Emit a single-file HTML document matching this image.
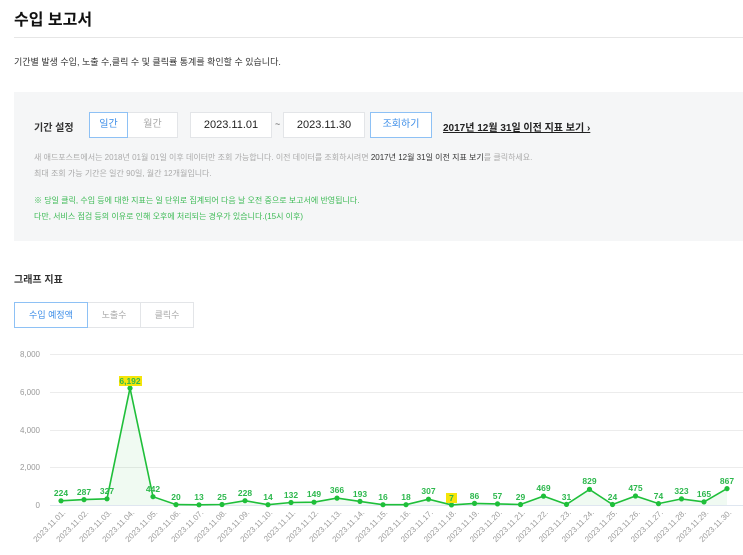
<!DOCTYPE html>
<html><head><meta charset="utf-8">
<style>
*{margin:0;padding:0;box-sizing:border-box}
body{width:743px;height:555px;background:#fff;font-family:"Liberation Sans","Noto Sans CJK KR",sans-serif;color:#222;position:relative;overflow:hidden}
.a{position:absolute;white-space:nowrap}
.box{position:absolute;background:#fff;border:1px solid #e3e5e8;display:flex;align-items:center;justify-content:center;font-size:10px;color:#aaa;line-height:1}
</style></head><body>
<div class="a" style="left:14px;top:6px;font-size:16px;font-weight:bold;color:#111">수입 보고서</div>
<div class="a" style="left:14px;top:37px;width:729px;height:1px;background:#e6e6e6"></div>
<div class="a" style="left:14px;top:55px;font-size:9px;color:#333">기간별 발생 수입, 노출 수,클릭 수 및 클릭률 통계를 확인할 수 있습니다.</div>

<div class="a" style="left:14px;top:92px;width:729px;height:149px;background:#f5f6f7"></div>
<div class="a" style="left:34px;top:119px;font-size:10px;font-weight:bold;color:#333">기간 설정</div>
<div class="box" style="left:89px;top:112px;width:39px;height:26px;border-color:#8ec1f5;color:#3d8ee8;z-index:2">일간</div>
<div class="box" style="left:127px;top:112px;width:51px;height:26px">월간</div>
<div class="box" style="left:190px;top:112px;width:82px;height:26px;color:#222;font-size:11px">2023.11.01</div>
<div class="a" style="left:275px;top:119px;font-size:9px;color:#555">~</div>
<div class="box" style="left:283px;top:112px;width:82px;height:26px;color:#222;font-size:11px">2023.11.30</div>
<div class="box" style="left:370px;top:112px;width:62px;height:26px;border-color:#8ec1f5;color:#3d8ee8">조회하기</div>
<div class="a" style="left:443px;top:119px;font-size:10px;font-weight:bold;color:#222;text-decoration:underline">2017년 12월 31일 이전 지표 보기 <span style="text-decoration:none">›</span></div>
<div class="a" style="left:34px;top:152px;font-size:8px;color:#aaa">새 애드포스트에서는 2018년 01월 01일 이후 데이터만 조회 가능합니다. 이전 데이터를 조회하시려면 <span style="color:#333">2017년 12월 31일 이전 지표 보기</span>를 클릭하세요.</div>
<div class="a" style="left:34px;top:168px;font-size:8px;color:#aaa">최대 조회 가능 기간은 일간 90일, 월간 12개월입니다.</div>
<div class="a" style="left:34px;top:195px;font-size:8px;color:#3cba54">※ 당일 클릭, 수입 등에 대한 지표는 일 단위로 집계되어 다음 날 오전 중으로 보고서에 반영됩니다.</div>
<div class="a" style="left:34px;top:211px;font-size:8px;color:#3cba54">다만, 서비스 점검 등의 이유로 인해 오후에 처리되는 경우가 있습니다.(15시 이후)</div>

<div class="a" style="left:14px;top:271px;font-size:10px;font-weight:bold;color:#333">그래프 지표</div>
<div class="box" style="left:14px;top:302px;width:74px;height:26px;border-color:#8ec1f5;color:#3d8ee8;z-index:2;font-size:9px">수입 예정액</div>
<div class="box" style="left:87px;top:302px;width:54px;height:26px;font-size:9px">노출수</div>
<div class="box" style="left:140px;top:302px;width:54px;height:26px;font-size:9px">클릭수</div>

<svg class="a" style="left:0;top:0" width="743" height="555" font-family="Liberation Sans, sans-serif">
<g stroke="#ececec" stroke-width="1">
<line x1="50" y1="354.5" x2="743" y2="354.5"/><line x1="50" y1="392.5" x2="743" y2="392.5"/><line x1="50" y1="430.5" x2="743" y2="430.5"/><line x1="50" y1="467.5" x2="743" y2="467.5"/>
</g>
<line x1="50" y1="505.5" x2="743" y2="505.5" stroke="#dfe6f0"/>
<g font-size="8" fill="#999" text-anchor="end">
<text x="40" y="357">8,000</text><text x="40" y="395">6,000</text><text x="40" y="433">4,000</text><text x="40" y="470">2,000</text><text x="40" y="508">0</text>
</g>
<polygon fill="#2db84d" fill-opacity="0.07" points="61,505 61,500.8 84,499.6 107,498.8 130,388.1 153,496.7 176,504.6 199,504.8 222,504.5 245,500.7 268,504.7 291,502.5 314,502.2 337,498.1 360,501.4 383,504.7 406,504.7 428.5,499.2 451.5,504.9 474.5,503.4 497.5,503.9 520.5,504.5 543.5,496.1 566.5,504.4 589.5,489.4 612.5,504.5 635.5,496 658.5,503.6 681.5,498.9 704,501.9 727,488.6 727,505"/>
<polyline fill="none" stroke="#1fbf3a" stroke-width="1.6" points="61,500.8 84,499.6 107,498.8 130,388.1 153,496.7 176,504.6 199,504.8 222,504.5 245,500.7 268,504.7 291,502.5 314,502.2 337,498.1 360,501.4 383,504.7 406,504.7 428.5,499.2 451.5,504.9 474.5,503.4 497.5,503.9 520.5,504.5 543.5,496.1 566.5,504.4 589.5,489.4 612.5,504.5 635.5,496 658.5,503.6 681.5,498.9 704,501.9 727,488.6"/>
<g fill="#1fbf3a">
<circle cx="61" cy="500.8" r="2.6"/><circle cx="84" cy="499.6" r="2.6"/><circle cx="107" cy="498.8" r="2.6"/><circle cx="130" cy="388.1" r="2.6"/><circle cx="153" cy="496.7" r="2.6"/><circle cx="176" cy="504.6" r="2.6"/><circle cx="199" cy="504.8" r="2.6"/><circle cx="222" cy="504.5" r="2.6"/><circle cx="245" cy="500.7" r="2.6"/><circle cx="268" cy="504.7" r="2.6"/><circle cx="291" cy="502.5" r="2.6"/><circle cx="314" cy="502.2" r="2.6"/><circle cx="337" cy="498.1" r="2.6"/><circle cx="360" cy="501.4" r="2.6"/><circle cx="383" cy="504.7" r="2.6"/><circle cx="406" cy="504.7" r="2.6"/><circle cx="428.5" cy="499.2" r="2.6"/><circle cx="451.5" cy="504.9" r="2.6"/><circle cx="474.5" cy="503.4" r="2.6"/><circle cx="497.5" cy="503.9" r="2.6"/><circle cx="520.5" cy="504.5" r="2.6"/><circle cx="543.5" cy="496.1" r="2.6"/><circle cx="566.5" cy="504.4" r="2.6"/><circle cx="589.5" cy="489.4" r="2.6"/><circle cx="612.5" cy="504.5" r="2.6"/><circle cx="635.5" cy="496" r="2.6"/><circle cx="658.5" cy="503.6" r="2.6"/><circle cx="681.5" cy="498.9" r="2.6"/><circle cx="704" cy="501.9" r="2.6"/><circle cx="727" cy="488.6" r="2.6"/>
</g>
<rect x="119" y="376" width="23" height="10" fill="#f5e50a"/>
<rect x="446" y="493" width="11" height="10" fill="#f5e50a"/>
<g font-size="8.5" font-weight="bold" fill="#2db84d" text-anchor="middle">
<text x="61" y="496">224</text><text x="84" y="495">287</text><text x="107" y="494">327</text><text x="130" y="384">6,192</text><text x="153" y="492">442</text><text x="176" y="500">20</text><text x="199" y="500">13</text><text x="222" y="500">25</text><text x="245" y="496">228</text><text x="268" y="500">14</text><text x="291" y="498">132</text><text x="314" y="497">149</text><text x="337" y="493">366</text><text x="360" y="497">193</text><text x="383" y="500">16</text><text x="406" y="500">18</text><text x="428.5" y="494">307</text><text x="451.5" y="501">7</text><text x="474.5" y="499">86</text><text x="497.5" y="499">57</text><text x="520.5" y="500">29</text><text x="543.5" y="491">469</text><text x="566.5" y="500">31</text><text x="589.5" y="484">829</text><text x="612.5" y="500">24</text><text x="635.5" y="491">475</text><text x="658.5" y="499">74</text><text x="681.5" y="494">323</text><text x="704" y="497">165</text><text x="727" y="484">867</text>
</g>
<g font-size="8" fill="#999" text-anchor="end">
<text transform="translate(66,513) rotate(-45)">2023.11.01.</text><text transform="translate(89,513) rotate(-45)">2023.11.02.</text><text transform="translate(112,513) rotate(-45)">2023.11.03.</text><text transform="translate(135,513) rotate(-45)">2023.11.04.</text><text transform="translate(158,513) rotate(-45)">2023.11.05.</text><text transform="translate(181,513) rotate(-45)">2023.11.06.</text><text transform="translate(204,513) rotate(-45)">2023.11.07.</text><text transform="translate(227,513) rotate(-45)">2023.11.08.</text><text transform="translate(250,513) rotate(-45)">2023.11.09.</text><text transform="translate(273,513) rotate(-45)">2023.11.10.</text><text transform="translate(296,513) rotate(-45)">2023.11.11.</text><text transform="translate(319,513) rotate(-45)">2023.11.12.</text><text transform="translate(342,513) rotate(-45)">2023.11.13.</text><text transform="translate(365,513) rotate(-45)">2023.11.14.</text><text transform="translate(388,513) rotate(-45)">2023.11.15.</text><text transform="translate(411,513) rotate(-45)">2023.11.16.</text><text transform="translate(433.5,513) rotate(-45)">2023.11.17.</text><text transform="translate(456.5,513) rotate(-45)">2023.11.18.</text><text transform="translate(479.5,513) rotate(-45)">2023.11.19.</text><text transform="translate(502.5,513) rotate(-45)">2023.11.20.</text><text transform="translate(525.5,513) rotate(-45)">2023.11.21.</text><text transform="translate(548.5,513) rotate(-45)">2023.11.22.</text><text transform="translate(571.5,513) rotate(-45)">2023.11.23.</text><text transform="translate(594.5,513) rotate(-45)">2023.11.24.</text><text transform="translate(617.5,513) rotate(-45)">2023.11.25.</text><text transform="translate(640.5,513) rotate(-45)">2023.11.26.</text><text transform="translate(663.5,513) rotate(-45)">2023.11.27.</text><text transform="translate(686.5,513) rotate(-45)">2023.11.28.</text><text transform="translate(709,513) rotate(-45)">2023.11.29.</text><text transform="translate(732,513) rotate(-45)">2023.11.30.</text>
</g>
</svg>
</body></html>
